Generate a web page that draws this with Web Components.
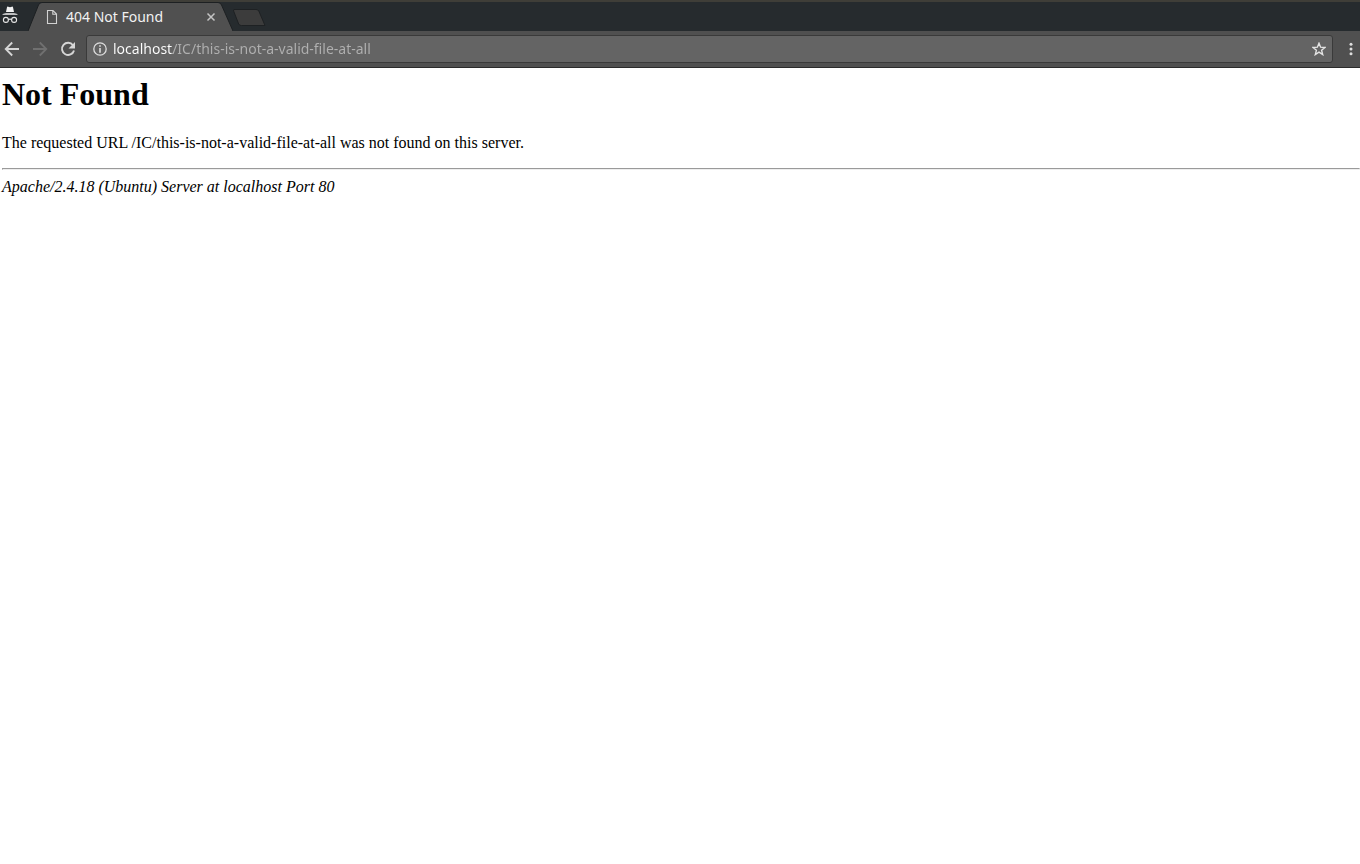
<!DOCTYPE html>
<html lang="en">
<head>
<meta charset="utf-8">
<title>404 Not Found</title>
<style>
  body { margin: 0; background: #fff; }
</style>
</head>
<body>
<browser-window>
  <tab-strip slot="tabs"><browser-tab>404 Not Found</browser-tab></tab-strip>
  <nav-toolbar slot="toolbar"><address-bar url="localhost/IC/this-is-not-a-valid-file-at-all"></address-bar></nav-toolbar>
  <error-page>
    <span slot="title">Not Found</span>
    <span slot="message">The requested URL /IC/this-is-not-a-valid-file-at-all was not found on this server.</span>
    <span slot="server">Apache/2.4.18 (Ubuntu) Server at localhost Port 80</span>
  </error-page>
</browser-window>

<script>
const define = (name, html, setup) => customElements.define(name, class extends HTMLElement {
  constructor() {
    super();
    this.attachShadow({ mode: 'open' }).innerHTML = html;
  }
  connectedCallback() { if (setup) setup(this); }
});

define('browser-window', `
  <style>
    :host { display: flex; flex-direction: column; min-height: 100vh; overflow: hidden; background: #fff; }
    header { font-family: "Noto Sans", "Open Sans", sans-serif; border-top: 2px solid #3f3e38; border-bottom: 1px solid #2b2b2b; }
    main { flex: 1; }
  </style>
  <header><slot name="tabs"></slot><slot name="toolbar"></slot></header>
  <main><slot></slot></main>`);

define('tab-strip', `
  <style>
    :host { display: flex; align-items: flex-end; height: 29px; background: #262b2e; }
    .incognito { display: block; width: 28px; height: 29px; flex: none; }
    .new { display: block; width: 36px; height: 29px; padding: 0; border: 0; background: none; flex: none; }
    svg { display: block; }
  </style>
  <svg class="incognito" viewBox="0 2 28 29" role="img" aria-label="Incognito">
    <path d="M6 12 7 7.2Q7.3 6.3 8.2 6.8L10 7.3 11.8 6.8Q12.7 6.3 13 7.2L14 12Z" fill="#f2f2f2"/>
    <path d="M2 14.800Q3 13.300 6 13.200H14Q17 13.300 18 14.800Z" fill="#f2f2f2"/>
    <g fill="none" stroke="#e6e6e6" stroke-width="1.1"><circle cx="5.9" cy="19.9" r="2.5"/><circle cx="14.1" cy="19.9" r="2.5"/><path d="M8.4 19.6Q10 18.6 11.6 19.6"/></g>
  </svg>
  <slot></slot>
  <button class="new" aria-label="New tab">
    <svg width="36" height="29" viewBox="233 2 36 29"><path d="M234 9.5H256Q258 9.5 258.800 11L265 25.500H241.500Q239.500 25.500 238.700 24L233.600 11Q233.200 9.500 234.500 9.5Z" fill="#3c3c3c" stroke="#1e2123"/></svg>
  </button>`);

define('browser-tab', `
  <style>
    :host { display: grid; width: 205px; height: 29px; color: #f2f2f2; font-size: 14px; line-height: 20px; }
    .shape, .content { grid-area: 1 / 1; }
    .shape { display: block; }
    .content { display: flex; align-items: center; padding: 0 16px 0 18px; }
    .title { flex: 1; padding-left: 8px; white-space: nowrap; }
    button { display: block; padding: 0; border: 0; background: none; }
    svg { display: block; }
  </style>
  <svg class="shape" width="205" height="29" viewBox="28 2 205 29">
    <path d="M28 31 38.5 5Q39.5 2.5 42 2.5H218Q220.500 2.5 221.500 5L233 31Z" fill="#505050"/>
    <path d="M28 31 38.5 5Q39.5 2.5 42 2.5H218Q220.500 2.5 221.500 5L233 31" fill="none" stroke="#1d2022"/>
  </svg>
  <div class="content">
    <svg width="12" height="16" viewBox="0 0 12 16" fill="none" stroke="#d2d2d2" stroke-width="1.100" aria-hidden="true"><path d="M1.500 1.500H7L10.500 5V14.500H1.500ZM6.800 1.500V5.200H10.500"/></svg>
    <span class="title"><slot></slot></span>
    <button aria-label="Close tab"><svg width="12" height="12" viewBox="0 0 12 12" stroke="#c4c4c4" stroke-width="1.500"><path d="M2.500 2.500 9.500 9.500M9.500 2.500 2.500 9.500"/></svg></button>
  </div>`);

define('nav-toolbar', `
  <style>
    :host { display: flex; align-items: center; gap: 12px; height: 36px; padding: 0 2px 0 4px; background: #505050; }
    .history { display: flex; gap: 12px; }
    :host { gap: 10px; }
    button { display: block; padding: 0; border: 0; background: none; flex: none; }
    ::slotted(address-bar) { flex: 1; }
    svg { display: block; }
  </style>
  <div class="history">
    <button aria-label="Back"><svg width="16" height="16" viewBox="0 0 16 16" fill="none" stroke="#d6d6d6" stroke-width="1.800"><path d="M15 8H2.500M8.200 1.500 1.700 8 8.200 14.500"/></svg></button>
    <button aria-label="Forward" disabled><svg width="16" height="16" viewBox="0 0 16 16" fill="none" stroke="#707070" stroke-width="1.800"><path d="M1 8H13.500M7.800 1.500 14.300 8 7.800 14.500"/></svg></button>
    <button aria-label="Reload"><svg width="16" height="16" viewBox="0 0 16 16"><path d="M13 4.200A6.100 6.100 0 1 0 14 9.500" fill="none" stroke="#d6d6d6" stroke-width="1.900"/><path d="M15 1V7.500H8.500Z" fill="#d6d6d6"/></svg></button>
  </div>
  <slot></slot>
  <button aria-label="Menu"><svg width="15" height="16" viewBox="0 0 15 16" fill="#dedede"><circle cx="8" cy="3.200" r="1.500"/><circle cx="8" cy="8" r="1.500"/><circle cx="8" cy="12.800" r="1.500"/></svg></button>`);

define('address-bar', `
  <style>
    :host { display: flex; align-items: center; gap: 6px; height: 28px; box-sizing: border-box; padding: 0 6px; border: 1px solid #3a3a3a; border-radius: 3px; background: #646464; }
    button { display: block; padding: 0; border: 0; background: none; flex: none; }
    svg { display: block; }
    input {
      flex: 1; min-width: 0; height: 22px; box-sizing: border-box; padding: 0 0 2px; border: 0; outline: 0;
      font: 14px/20px "Noto Sans", "Open Sans", sans-serif; color: #f2f2f2;
      background: linear-gradient(90deg, #fff 60px, #b0b0b0 60px);
      -webkit-background-clip: text; background-clip: text; -webkit-text-fill-color: transparent;
    }
  </style>
  <button aria-label="Site information"><svg width="14" height="14" viewBox="0 0 14 14"><circle cx="7" cy="7" r="6.200" fill="none" stroke="#dedede" stroke-width="1.300"/><path d="M6.200 6H7.800V10.800H6.200ZM6.200 3.200H7.800V4.800H6.200Z" fill="#dedede"/></svg></button>
  <input type="text" aria-label="Address" spellcheck="false">
  <button aria-label="Bookmark this page"><svg width="14" height="14" viewBox="0 0 14 14"><path d="M7 1.200 8.600 5.200 13 5.500 9.600 8.300 10.700 12.600 7 10.200 3.300 12.600 4.400 8.300 1 5.500 5.400 5.200Z" fill="none" stroke="#e4e4e4" stroke-width="1.400"/></svg></button>`,
  host => { host.shadowRoot.querySelector('input').value = host.getAttribute('url'); });

define('error-page', `
  <style>
    :host { display: block; padding: 8px 0 8px 2px; color: #000; font: 16px "Liberation Serif", serif; }
    h1 { margin: 0 0 21px; font-size: 32px; }
    p { margin: 0 0 16px; }
    hr { margin: 0 0 8px; }
    address { font-style: italic; }
  </style>
  <h1><slot name="title"></slot></h1>
  <p><slot name="message"></slot></p>
  <hr>
  <address><slot name="server"></slot></address>`);
</script>
</body>
</html>
